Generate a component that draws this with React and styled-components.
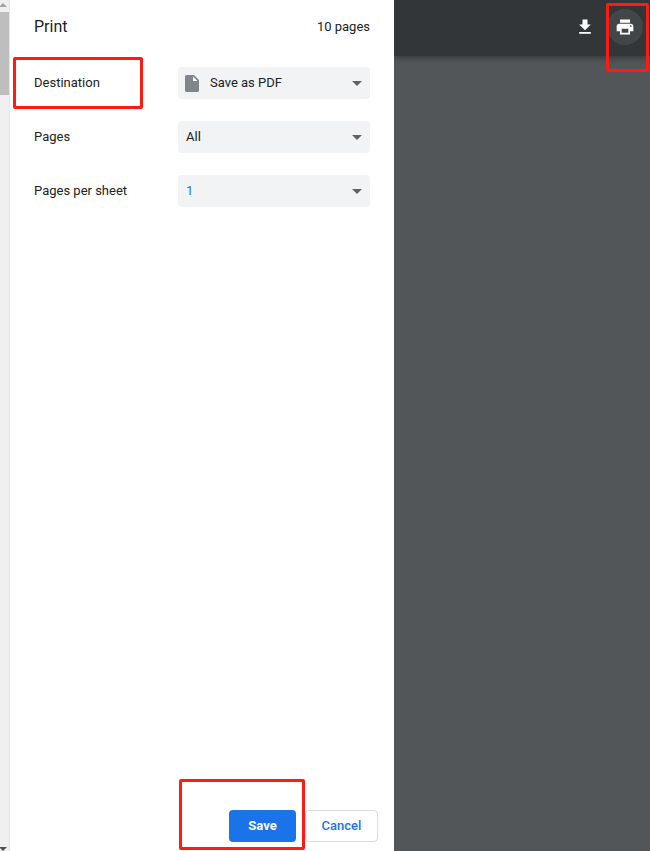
import React from 'react';
import styled, { createGlobalStyle } from 'styled-components';

const GlobalStyle = createGlobalStyle`
  html, body {
    margin: 0;
    padding: 0;
    height: 100%;
    overflow: hidden;
  }
  body {
    font-family: Roboto, "Liberation Sans", sans-serif;
    color: #202124;
  }
`;

const Page = styled.div`
  position: relative;
  display: flex;
  width: 650px;
  height: 851px;
  overflow: hidden;
`;

const Scrollbar = styled.div`
  width: 9px;
  flex: none;
  display: flex;
  flex-direction: column;
  justify-content: space-between;
  background: #f0f0f0;
  border-right: 1px solid #e6e6e6;
`;

const ScrollTop = styled.div`
  display: flex;
  flex-direction: column;
`;

const Arrow = styled.div`
  width: 0;
  height: 0;
  margin: ${(p) => (p.$down ? '0 0 0 -1px' : '3px 0 0 -1px')};
  border-left: 4px solid transparent;
  border-right: 4px solid transparent;
  border-bottom: ${(p) => (p.$down ? '0' : '4px solid #a3a3a3')};
  border-top: ${(p) => (p.$down ? '4px solid #505050' : '0')};
`;

const Thumb = styled.div`
  height: 83px;
  margin-top: 5px;
  background: #bebebe;
`;

const Sidebar = styled.aside`
  width: 384px;
  flex: none;
  display: flex;
  flex-direction: column;
  background: #fff;
`;

const Header = styled.header`
  display: flex;
  justify-content: space-between;
  align-items: center;
  height: 53px;
  padding: 0 24px;
  box-sizing: border-box;
`;

const Title = styled.h1`
  margin: 0;
  font-size: 16px;
  font-weight: 400;
`;

const PageCount = styled.span`
  font-size: 13px;
`;

const Settings = styled.div`
  display: flex;
  flex-direction: column;
  gap: 22px;
  padding: 14px 24px 0;
`;

const Row = styled.div`
  display: flex;
  align-items: center;
  justify-content: space-between;
  height: 32px;
`;

const Label = styled.span`
  font-size: 13px;
  margin-bottom: 2px;
`;

const Select = styled.div`
  display: flex;
  align-items: center;
  gap: 11px;
  width: 192px;
  height: 32px;
  box-sizing: border-box;
  padding: 0 8px 0 ${(p) => (p.$icon ? '7px' : '8px')};
  border-radius: 4px;
  background: #f1f3f4;
  font-size: 13px;
  color: ${(p) => p.$color || '#202124'};
`;

const SelectText = styled.span`
  flex: 1;
  margin-bottom: 2px;
`;

const Caret = styled.div`
  width: 0;
  height: 0;
  border-left: 5px solid transparent;
  border-right: 5px solid transparent;
  border-top: 5px solid #5f6368;
`;

const Footer = styled.footer`
  margin-top: auto;
  display: flex;
  justify-content: flex-end;
  gap: 9px;
  padding: 0 16px 9px 0;
`;

const Button = styled.button`
  height: 32px;
  box-sizing: border-box;
  border-radius: 4px;
  font-family: inherit;
  font-size: 13px;
  font-weight: 500;
  padding: 0 0 2px;
`;

const SaveButton = styled(Button)`
  width: 67px;
  border: none;
  background: #1a73e8;
  color: #fff;
  font-weight: 700;
`;

const CancelButton = styled(Button)`
  width: 73px;
  border: 1px solid #dadce0;
  background: #fff;
  color: #1a73e8;
`;

const Viewer = styled.main`
  flex: 1;
  display: flex;
  flex-direction: column;
  overflow: hidden;
  background: #525659;
`;

const Toolbar = styled.div`
  height: 56px;
  flex: none;
  display: flex;
  justify-content: flex-end;
  align-items: center;
  gap: 4px;
  padding: 0 7px 2px 0;
  box-sizing: border-box;
  background: #323639;
  box-shadow: 0 2px 6px rgba(0, 0, 0, 0.35);
`;

const ToolButton = styled.div`
  width: 36px;
  height: 36px;
  display: flex;
  align-items: center;
  justify-content: center;
  border-radius: 50%;
  background: ${(p) => (p.$active ? '#424649' : 'transparent')};
`;

const Mark = styled.div`
  position: absolute;
  box-sizing: border-box;
  border: 3px solid #ff1a12;
  border-radius: 2px;
  pointer-events: none;
`;

const DestinationMark = styled(Mark)`
  left: 13px;
  top: 57px;
  width: 130px;
  height: 52px;
`;

const PrintMark = styled(Mark)`
  left: 606px;
  top: 3px;
  width: 43px;
  height: 69px;
`;

const SaveMark = styled(Mark)`
  left: 179px;
  top: 779px;
  width: 126px;
  height: 71px;
`;

const FileIcon = () => (
  <svg width="14" height="17" viewBox="0 0 14 17">
    <path d="M1.500 0H9l5 5v10.500a1.500 1.500 0 0 1-1.500 1.500h-11A1.500 1.500 0 0 1 0 15.500v-14A1.500 1.500 0 0 1 1.500 0z" fill="#80868b" />
    <path d="M8 1.500L12.500 6H8z" fill="#fff" />
  </svg>
);

const DownloadIcon = () => (
  <svg width="20" height="20" viewBox="0 0 24 24" fill="#fff">
    <path d="M19 9h-4V3H9v6H5l7 7 7-7zM5 18v2h14v-2H5z" />
  </svg>
);

const PrintIcon = () => (
  <svg width="20" height="20" viewBox="0 0 24 24" fill="#fff">
    <path d="M19 8H5c-1.660 0-3 1.340-3 3v6h4v4h12v-4h4v-6c0-1.660-1.340-3-3-3zm-3 11H8v-5h8v5zm3-7c-.550 0-1-.450-1-1s.450-1 1-1 1 .450 1 1-.450 1-1 1zm-1-9H6v4h12V3z" />
  </svg>
);

const App = () => {
  return (
    <Page>
      <GlobalStyle />
      <Scrollbar>
        <ScrollTop>
          <Arrow />
          <Thumb />
        </ScrollTop>
        <Arrow $down />
      </Scrollbar>

      <Sidebar>
        <Header>
          <Title>Print</Title>
          <PageCount>10 pages</PageCount>
        </Header>
        <Settings>
          <Row>
            <Label>Destination</Label>
            <Select $icon>
              <FileIcon />
              <SelectText>Save as PDF</SelectText>
              <Caret />
            </Select>
          </Row>
          <Row>
            <Label>Pages</Label>
            <Select>
              <SelectText>All</SelectText>
              <Caret />
            </Select>
          </Row>
          <Row>
            <Label>Pages per sheet</Label>
            <Select $color="#1a73e8">
              <SelectText>1</SelectText>
              <Caret />
            </Select>
          </Row>
        </Settings>
        <Footer>
          <SaveButton>Save</SaveButton>
          <CancelButton>Cancel</CancelButton>
        </Footer>
      </Sidebar>

      <Viewer>
        <Toolbar>
          <ToolButton>
            <DownloadIcon />
          </ToolButton>
          <ToolButton $active>
            <PrintIcon />
          </ToolButton>
        </Toolbar>
      </Viewer>

      <DestinationMark />
      <PrintMark />
      <SaveMark />
    </Page>
  );
};

export default App;
